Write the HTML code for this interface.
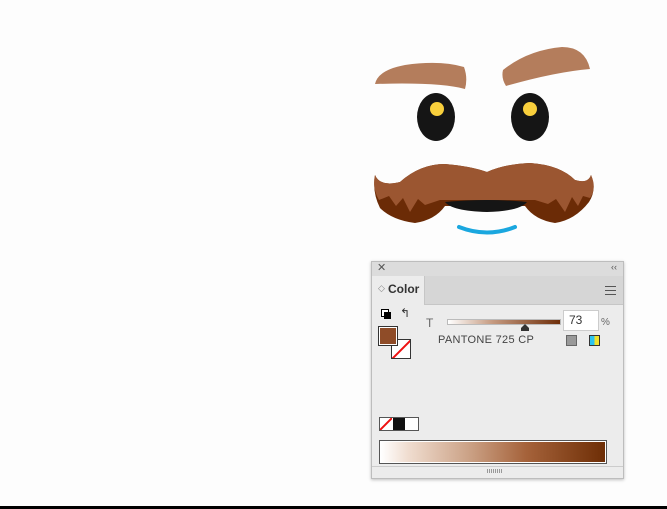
<!DOCTYPE html>
<html><head><meta charset="utf-8"><style>
body{margin:0;width:667px;height:509px;background:#fdfdfd;position:relative;overflow:hidden;font-family:"Liberation Sans",sans-serif}
.a{position:absolute}
</style></head><body>
<svg class="a" style="left:0;top:0" width="667" height="509">
<path d="M375 84 Q378 70 405 65 Q440 60 464 67 Q468 78 465 89 Q440 82 375 84Z" fill="#b47d5c"/>
<path d="M503 70 Q528 50 562 47 Q585 47 590 69 Q555 72 506 86 Q501 78 503 70Z" fill="#b47d5c"/>
<ellipse cx="436" cy="117" rx="19" ry="24" fill="#151515"/>
<ellipse cx="530" cy="117" rx="19" ry="24" fill="#151515"/>
<circle cx="437" cy="109" r="7" fill="#f8cf3c"/>
<circle cx="530" cy="109" r="7" fill="#f8cf3c"/>
<path d="M375 175 Q380 187 400 182 Q420 164 445 164 Q470 166 487 172 Q505 164 530 163 Q560 165 575 180 Q588 184 591 175 Q597 190 589 202 Q575 220 555 223 Q535 220 525 206 L445 206 Q435 220 415 223 Q392 220 380 208 Q372 192 375 175Z" fill="#6b2b06"/>
<path d="M375 175 Q380 187 400 182 Q420 164 445 164 Q470 166 487 172 Q505 164 530 163 Q560 165 575 180 Q588 184 591 175 Q597 188 590 198 L583 196 L578 206 L572 197 L565 212 L556 199 L548 204 L535 200 L440 200 L425 205 L418 199 L410 212 L403 198 L396 206 L389 196 L379 200 Q372 188 375 175Z" fill="#9b5631"/>
<path d="M445 202 Q488 198 527 202 Q520 211 487 212 Q452 211 445 202Z" fill="#151515"/>
<path d="M459 227 Q487 238 515 227" stroke="#1aa7df" stroke-width="4" fill="none" stroke-linecap="round"/>
<rect x="0" y="506" width="667" height="3" fill="#000"/>
</svg>
<div class="a" style="left:371px;top:261px;width:251px;height:216px;background:#ececec;border:1px solid #bdbdbd;box-shadow:0 1px 3px rgba(0,0,0,.25)">
  <div class="a" style="left:0;top:0;width:251px;height:14px;background:#dcdcdc;font-size:11px;color:#555"><span class="a" style="left:5px;top:-1px">✕</span><span class="a" style="right:6px;top:0px;font-size:9px">‹‹</span></div>
  <div class="a" style="left:0;top:14px;width:251px;height:28px;background:#d6d6d6;border-bottom:1px solid #c6c6c6"></div>
  <div class="a" style="left:0;top:14px;width:52px;height:29px;background:#ececec;border-right:1px solid #c6c6c6"><span class="a" style="left:6px;top:7px;font-size:9px;color:#888">◇</span><span class="a" style="left:16px;top:6px;font-size:12px;font-weight:bold;color:#333">Color</span></div>
  <div class="a" style="right:7px;top:24px;width:11px;height:7px;border-top:1px solid #555;border-bottom:1px solid #555"><div style="margin-top:3px;border-top:1px solid #555"></div></div>
  <div class="a" style="left:9px;top:47px;width:6px;height:6px;border:1px solid #000;background:#fff"></div>
  <div class="a" style="left:12px;top:50px;width:5px;height:5px;border:1px solid #000;background:#000"></div>
  <span class="a" style="left:28px;top:44px;font-size:12px;color:#333">↰</span>
  <div class="a" style="left:19px;top:77px;width:18px;height:18px;border:1px solid #333;background:#fff;overflow:hidden"><div style="position:absolute;left:-4px;top:8px;width:28px;height:2px;background:#e11;transform:rotate(-45deg)"></div></div>
  <div class="a" style="left:7px;top:65px;width:16px;height:16px;border:1px solid #fff;outline:1px solid #333;background:#8f4c28"></div>
  <span class="a" style="left:54px;top:54px;font-size:12px;color:#666">T</span>
  <div class="a" style="left:75px;top:57px;width:112px;height:4px;background:linear-gradient(90deg,#fff,#c59a80 40%,#6e2e0a);border:1px solid #bbb"></div>
  <div class="a" style="left:149px;top:62px;width:0;height:0;border-left:4px solid transparent;border-right:4px solid transparent;border-bottom:4px solid #333"></div>
  <div class="a" style="left:149px;top:66px;width:8px;height:3px;background:#333"></div>
  <div class="a" style="left:191px;top:48px;width:34px;height:19px;background:#fff;border:1px solid #ccc;font-size:12px;color:#333;line-height:19px;text-indent:5px">73</div>
  <span class="a" style="left:229px;top:55px;font-size:10px;color:#666">%</span>
  <span class="a" style="left:66px;top:72px;font-size:11px;color:#444;letter-spacing:.3px">PANTONE 725 CP</span>
  <div class="a" style="left:194px;top:73px;width:9px;height:9px;background:#999;border:1px solid #666"></div>
  <div class="a" style="left:217px;top:73px;width:9px;height:9px;background:linear-gradient(90deg,#2cc4f0 50%,#f0e22c 50%);border:1px solid #333"></div>
  <div class="a" style="left:7px;top:155px;width:38px;height:12px;border:1px solid #555;background:#fff"><div style="position:absolute;left:0;top:0;width:12px;height:12px;overflow:hidden"><div style="position:absolute;left:-3px;top:5px;width:18px;height:2px;background:#e11;transform:rotate(-45deg)"></div></div><div style="position:absolute;left:13px;top:0;width:12px;height:12px;background:#111"></div></div>
  <div class="a" style="left:7px;top:178px;width:224px;height:20px;border:1px solid #555;background:#fff;padding:1px"><div style="width:100%;height:100%;background:linear-gradient(90deg,#fff,#f0ddd0 12%,#caa084 40%,#a5623a 65%,#6e2e06)"></div></div>
  <div class="a" style="left:0;top:204px;width:251px;height:1px;background:#ccc"></div>
  <div class="a" style="left:115px;top:207px;width:16px;height:4px;background:repeating-linear-gradient(90deg,#999 0 1px,transparent 1px 2px)"></div>
</div>
</body></html>
